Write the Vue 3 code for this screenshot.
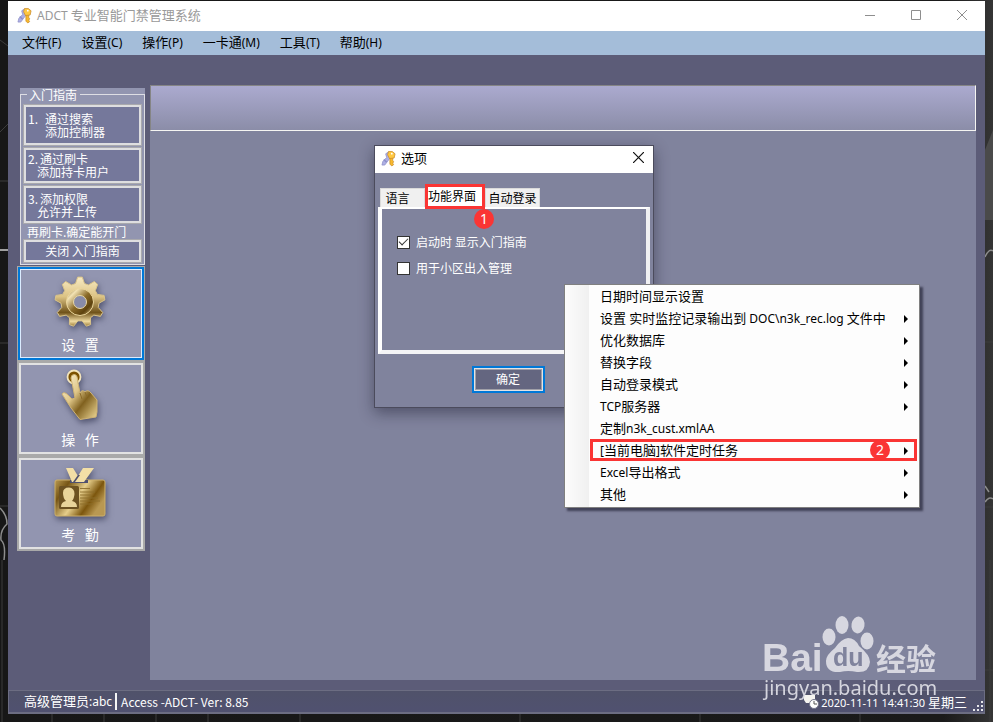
<template>
  <div class="desktop">
    <svg class="wallpaper" viewBox="0 0 993 722" preserveAspectRatio="none" aria-hidden="true">
      <g fill="none" stroke="#3c3c3c">
        <path d="M0 181 H8 M0 343 H8 M0 506 H8 M985 342 H993 M985 507 H993 M985 670 H993" />
        <path d="M0 132 L8 124 M0 40 L8 46 M2 560 V722 M990 560 V722 M52 714 V722 M104 714 V722 M156 714 V722 M208 714 V722 M300 714 V722 M520 714 V722 M700 714 V722 M860 714 V722" />
      </g>
      <path d="M985 150 L993 130 V220 H985 Z" fill="#4a4a4a" />
      <path d="M0 250 H8" stroke="#a0a0a0" stroke-width="2" />
      <g fill="none" stroke="#8d8d8d" stroke-width="1.5">
        <path d="M0 508 Q7 515 7 524 Q0 530 1 540 Q6 544 4 560" />
        <path d="M985 257 Q989 248 993 251 M985 502 Q989 496 993 499 M985 486 L989 492" />
      </g>
    </svg>

    <main class="window">
      <header class="titlebar">
        <svg class="keys" viewBox="0 0 16 18" aria-hidden="true">
          <path d="M8 2 L10 8 L4 16 L1 16 L2 12 L6 8 L5 4 Z" fill="#aeb0e4" stroke="#8d8fc8" stroke-width=".8" />
          <path d="M3 10 L6 13" stroke="#8d8fc8" stroke-width="1.6" />
          <path d="M9.5 8 V15 L11.5 17 L13.5 15.5 L12.5 14 L13.500 12.500 L12.500 11 V8 Z" fill="#f8b92c" stroke="#c98b2c" stroke-width=".8" />
          <path d="M8 1.500 H12 L15 4 L14 8.500 L9 9 L7 5 Z" fill="#ffc840" stroke="#c98b2c" stroke-width=".8" />
          <circle cx="11.500" cy="3.800" r="1" fill="#fff" />
        </svg>
        <h1><span class="latin">ADCT </span>专业智能门禁管理系统</h1>
        <div class="caption">
          <button type="button" aria-label="最小化"><svg viewBox="0 0 10 10"><path d="M0 5.5 H10" /></svg></button>
          <button type="button" aria-label="最大化"><svg viewBox="0 0 10 10"><path d="M.5 .5 H9.5 V9.5 H.5 Z" /></svg></button>
          <button type="button" aria-label="关闭"><svg viewBox="0 0 10 10"><path d="M0 0 L10 10 M10 0 L0 10" /></svg></button>
        </div>
      </header>

      <nav class="menubar">
        <button v-for="m in menus" :key="m.key" type="button">{{ m.name }}<span class="latin">({{ m.key }})</span></button>
      </nav>

      <div class="body">
        <aside class="sidebar">
          <div class="guide">
            <fieldset>
              <legend>入门指南</legend>
              <button v-for="(s, i) in steps" :key="i" type="button" :class="['step', 'step--' + (i + 1)]">
                <span class="step__no">{{ i + 1 }}.</span>
                <span class="step__text">
                  <span>{{ s[0] }}</span>
                  <span class="step__second">{{ s[1] }}</span>
                </span>
              </button>
              <p>再刷卡.确定能开门</p>
              <button type="button" class="guide__close">关闭 入门指南</button>
            </fieldset>
          </div>

          <div class="tools">
            <button type="button" class="tool tool--active">
              <svg viewBox="0 0 56 60" aria-hidden="true">
                <defs>
                  <linearGradient id="gold" x1="0" y1="0" x2="1" y2="1">
                    <stop offset="0" stop-color="#fff6dc" />
                    <stop offset=".4" stop-color="#dfc687" />
                    <stop offset=".62" stop-color="#80611f" />
                    <stop offset="1" stop-color="#f2dc9a" />
                  </linearGradient>
                  <linearGradient id="ring" x1="0" y1="0" x2="1" y2="1">
                    <stop offset="0" stop-color="#6f5219" />
                    <stop offset=".22" stop-color="#f3e3b4" />
                    <stop offset=".5" stop-color="#8a6a28" />
                    <stop offset=".75" stop-color="#5d420e" />
                    <stop offset="1" stop-color="#e2c98a" />
                  </linearGradient>
                  <linearGradient id="goldGear" x1="0" y1="0" x2="0" y2="1">
                    <stop offset="0" stop-color="#f8ebc3" />
                    <stop offset=".4" stop-color="#dcc384" />
                    <stop offset=".72" stop-color="#70531a" />
                    <stop offset=".9" stop-color="#f0dba0" />
                    <stop offset="1" stop-color="#9c7b36" />
                  </linearGradient>
                </defs>
                <path :d="gearPath" fill="url(#goldGear)" stroke="#d9c389" stroke-linejoin="round" />
                <circle cx="28" cy="29" r="13.5" fill="url(#ring)" stroke="#ecd79c" />
                <circle cx="28" cy="29" r="6.5" fill="#888ba8" stroke="#ead8a5" />
              </svg>
              <span>设&nbsp;&nbsp;&nbsp;置</span>
            </button>
            <button type="button" class="tool">
              <svg viewBox="0 0 56 60" aria-hidden="true">
                <circle cx="22" cy="9" r="6.500" fill="#7c5100" stroke="#f3e5bd" stroke-width="1.8" />
                <path d="M19 10 Q19 6.500 22.500 6.500 Q25.500 7 25.500 12 L28 25 Q30 21 33 24 Q36 21 39 25 L45 32 V44 L44 49 L28 51.500 L19 40 L10 26 Q12 23 16 27 L20 31 L23 30 Z" fill="url(#gold)" stroke="#cfb374" />
                <path d="M28 25 L30 31 M33 24 L35 29" stroke="#8b6b2b" />
              </svg>
              <span>操&nbsp;&nbsp;&nbsp;作</span>
            </button>
            <button type="button" class="tool">
              <svg viewBox="0 0 56 60" aria-hidden="true">
                <defs>
                  <linearGradient id="badge" x1="0" y1="0" x2="1" y2=".5">
                    <stop offset="0" stop-color="#b99a52" />
                    <stop offset=".25" stop-color="#765515" />
                    <stop offset=".55" stop-color="#e6ce8b" />
                    <stop offset=".8" stop-color="#7c560d" />
                    <stop offset="1" stop-color="#b99852" />
                  </linearGradient>
                </defs>
                <rect x="3" y="17" width="50" height="36" rx="2" fill="url(#badge)" stroke="#cdb06b" />
                <path d="M18 17 H36 V20 H18 Z" fill="#4f5070" />
                <path d="M14 5 H21 L26 13 L31 5 H42 L32 19 H20 Z" fill="#f3dfa6" />
                <path d="M26 12 L21 19 H23 L28 12 Z" fill="#50506c" />
                <rect x="7" y="23" width="20" height="23" rx="1.500" fill="#6d5221" />
                <path d="M11 30 Q11 24.500 17 24.500 Q22.500 25 22.500 31 Q22 36 20 38 Q25 39 25 44 H9 Q9 39 14 38 Q11 35 11 30 Z" fill="#e9d49a" />
                <path d="M28 25.500 H38 M28 29 H43 M28 32 H39 M28 35 H46 M28 38 H48 M28 41 H41" stroke="#8d6d2b" stroke-width=".9" />
              </svg>
              <span>考&nbsp;&nbsp;&nbsp;勤</span>
            </button>
          </div>
        </aside>

        <section class="workspace"><div class="workspace__band"></div></section>
      </div>

      <footer class="status">
        <span class="status__user">高级管理员<span class="latin">:abc</span></span>
        <span class="status__version">Access -ADCT- Ver: 8.85</span>
        <svg class="status__clock" viewBox="0 0 16 14" aria-hidden="true">
          <path d="M1 0 H12 V8 H3 L1 5 Z" fill="#f5f4ef" />
          <circle cx="11" cy="9" r="4.500" fill="#fff" stroke="#75758b" />
          <path d="M11 6 V9 H14" fill="none" stroke="#555" />
        </svg>
        <time datetime="2020-11-11T14:41:30"><span class="status__digits">2020-11-11 14:41:30 </span>星期三</time>
        <svg class="grip" viewBox="0 0 12 12" aria-hidden="true">
          <path d="M9 1 H11 V3 H9 Z M9 5 H11 V7 H9 Z M9 9 H11 V11 H9 Z M5 5 H7 V7 H5 Z M5 9 H7 V11 H5 Z M1 9 H3 V11 H1 Z" fill="#e6e6ea" />
        </svg>
      </footer>
    </main>

    <section class="dialog" role="dialog" aria-labelledby="dialog-title">
      <header class="dialog__title">
        <svg class="keys" viewBox="0 0 16 18" aria-hidden="true">
          <path d="M8 2 L10 8 L4 16 L1 16 L2 12 L6 8 L5 4 Z" fill="#aeb0e4" stroke="#8d8fc8" stroke-width=".8" />
          <path d="M3 10 L6 13" stroke="#8d8fc8" stroke-width="1.6" />
          <path d="M9.5 8 V15 L11.5 17 L13.5 15.5 L12.5 14 L13.500 12.500 L12.500 11 V8 Z" fill="#f8b92c" stroke="#c98b2c" stroke-width=".8" />
          <path d="M8 1.500 H12 L15 4 L14 8.500 L9 9 L7 5 Z" fill="#ffc840" stroke="#c98b2c" stroke-width=".8" />
          <circle cx="11.500" cy="3.800" r="1" fill="#fff" />
        </svg>
        <h2 id="dialog-title">选项</h2>
        <button type="button" aria-label="关闭"><svg viewBox="0 0 10 10"><path d="M0 0 L10 10 M10 0 L0 10" /></svg></button>
      </header>
      <div class="tabs" role="tablist">
        <button type="button" role="tab" class="tab tab--first">语言</button>
        <button type="button" role="tab" class="tab tab--active" aria-selected="true">功能界面</button>
        <button type="button" role="tab" class="tab">自动登录</button>
        <b class="marker marker--tab">1</b>
      </div>
      <div class="panel">
        <label><input v-model="showGuide" type="checkbox" />启动时 显示入门指南</label>
        <label><input v-model="community" type="checkbox" />用于小区出入管理</label>
      </div>
      <button type="button" class="ok">确定</button>
    </section>

    <div class="popup" role="menu">
      <button
        v-for="item in items"
        :key="item.label"
        type="button"
        role="menuitem"
        :class="['popup__item', { 'popup__item--marked': item.marked }]"
      >
        <span class="popup__label"><span v-for="(part, i) in split(item.label)" :key="i" :class="{ latin: isLatin(part) }">{{ part }}</span></span>
        <b v-if="item.marked" class="marker">2</b>
        <svg v-if="item.sub" class="popup__arrow" viewBox="0 0 4 8" aria-hidden="true"><path d="M0 0 L4 4 L0 8 Z" /></svg>
      </button>
    </div>

    <svg class="watermark" viewBox="0 0 180 86" aria-hidden="true">
      <g fill="#dcdce4">
        <text x="0" y="57" class="watermark__bai">Bai</text>
        <ellipse cx="67" cy="23" rx="6.5" ry="8.5" />
        <ellipse cx="80" cy="11" rx="6.500" ry="9" />
        <ellipse cx="96" cy="11" rx="6.500" ry="8.500" transform="rotate(10 96 11)" />
        <ellipse cx="105" cy="27" rx="6.500" ry="8.500" />
        <path d="M86 24 Q93 24 97 32 Q108 41 108 48 Q107 59 95 58 Q86 56 78 58 Q64 59 64 47 Q64 41 73 34 Q79 25 86 24 Z" />
        <text x="114" y="56" class="watermark__cn">经验</text>
        <text x="2" y="81" class="watermark__url">jingyan.baidu.com</text>
      </g>
      <text x="71" y="52" class="watermark__du">du</text>
    </svg>
  </div>
</template>

<script setup>
import { ref } from 'vue'

const showGuide = ref(true)
const community = ref(false)

const menus = [
  { name: '文件', key: 'F' },
  { name: '设置', key: 'C' },
  { name: '操作', key: 'P' },
  { name: '一卡通', key: 'M' },
  { name: '工具', key: 'T' },
  { name: '帮助', key: 'H' },
]

const steps = [
  ['通过搜索', '添加控制器'],
  ['通过刷卡', '添加持卡用户'],
  ['添加权限', '允许并上传'],
]

const items = [
  { label: '日期时间显示设置' },
  { label: '设置 实时监控记录输出到 DOC\\n3k_rec.log 文件中', sub: true },
  { label: '优化数据库', sub: true },
  { label: '替换字段', sub: true },
  { label: '自动登录模式', sub: true },
  { label: 'TCP服务器', sub: true },
  { label: '定制n3k_cust.xmlAA' },
  { label: '[当前电脑]软件定时任务', sub: true, marked: true },
  { label: 'Excel导出格式', sub: true },
  { label: '其他', sub: true },
]

const split = (label) => label.match(/[\x20-\x7e]+|[^\x20-\x7e]+/g)
const isLatin = (part) => /^[\x20-\x7e]/.test(part)

// teeth are laid out clockwise from the top, round (28, 29)
function gear(teeth, outer, inner) {
  const step = (Math.PI * 2) / teeth
  const pts = []
  for (let i = 0; i < teeth; i++) {
    const mid = i * step - Math.PI / 2
    for (const [offset, r] of [[-0.34, inner], [-0.13, outer], [0.13, outer], [0.34, inner]]) {
      const a = mid + offset * step
      pts.push(`${(28 + Math.cos(a) * r).toFixed(1)} ${(29 + Math.sin(a) * r).toFixed(1)}`)
    }
  }
  return `M${pts.join(' L')} Z`
}
const gearPath = gear(9, 25, 19)
</script>

<style>
body {
  background: #181818;
}
</style>

<style scoped>
.desktop {
  position: relative;
  display: flex;
  box-sizing: border-box;
  min-height: 100vh;
  padding: 1px 8px 8px;
  overflow: hidden;
  background: linear-gradient(90deg, #171717 0%, #1a1a1a 95%, #353535 100%);
  color: #fff;
  font: 13px/20px "Noto Sans CJK SC", sans-serif;
}

button {
  margin: 0;
  padding: 0;
  border: 0;
  background: none;
  color: inherit;
  font: inherit;
}

h1,
h2,
p {
  margin: 0;
  font: inherit;
}

.latin {
  font-family: "Noto Sans", sans-serif;
  font-size: 12px;
  white-space: pre-wrap;
}

.wallpaper {
  position: absolute;
  inset: 0;
  width: 100%;
  height: 100%;
}

.window {
  position: relative;
  display: flex;
  flex: 1;
  flex-direction: column;
  min-width: 0;
  background: #5c5c78;
}

.titlebar {
  display: flex;
  align-items: center;
  box-sizing: border-box;
  height: 30px;
  padding: 0 0 2px 9px;
  background: #fff;
  color: #999;
}

.keys {
  width: 15px;
  height: 17px;
  margin-right: 5px;
  fill: none;
}

.caption {
  display: flex;
  margin-left: auto;
}

.caption button {
  height: 28px;
  width: 46px;
}

.caption svg {
  width: 10px;
  height: 10px;
  fill: none;
  stroke: #8e8e8e;
}

.menubar {
  display: flex;
  gap: 20px;
  box-sizing: border-box;
  height: 24px;
  padding: 0 0 2px 14px;
  background: #a4bdd9;
  color: #000;
}

.body {
  display: flex;
  flex: 1;
  gap: 5px;
  padding: 30px 9px 10px;
}

.sidebar {
  display: flex;
  flex-direction: column;
  width: 128px;
  padding-top: 3px;
}

.guide {
  margin-left: 3px;
  background: #9295b0;
}

.guide fieldset {
  display: flex;
  flex-direction: column;
  min-width: 0;
  margin: 0;
  padding: 4px 3px 2px;
  border: 1px solid #dedee4;
  font-size: 12px;
  line-height: 13px;
}

.guide legend {
  margin-left: 3px;
  padding: 0 3px 0 2px;
}

.step {
  display: flex;
  gap: 2px;
  height: 35px;
  margin-bottom: 3px;
  padding: 2px 2px 3px;
  text-align: left;
}

.step,
.guide__close {
  box-sizing: border-box;
  border: 2px solid #dedee0;
  outline: 1px solid #a9a9ad;
  background: #75789b;
  line-height: 13px;
}

.step--1 {
  gap: 7px;
  height: 40px;
  padding-top: 5px;
}

.step--2 .step__second,
.step--3 .step__second {
  margin-left: -3px;
}

.step--3 {
  height: 37px;
  padding-top: 4px;
}

.step__no {
  flex: none;
  width: 10px;
}

.step__text {
  display: flex;
  flex-direction: column;
  white-space: nowrap;
}

.guide p {
  padding-left: 3px;
  line-height: 12px;
}

.guide__close {
  height: 22px;
  margin-top: 2px;
  padding-bottom: 2px;
}

.tools {
  display: flex;
  flex-direction: column;
  gap: 4px;
  margin-top: 1px;
  padding: 2px;
  background: #a9a9a9;
}

.tool {
  display: flex;
  flex-direction: column;
  align-items: center;
  box-sizing: border-box;
  height: 91px;
  padding: 3px 2px 2px 0;
  border: 2px solid #e2e2e2;
  background: #9295b0;
  font-size: 14px;
  line-height: 20px;
}

.tool svg {
  width: 56px;
  height: 60px;
  filter: drop-shadow(1px 3px 3px rgba(45, 48, 75, 0.65));
}

.tool span {
  margin-top: 1px;
}

.tool--active {
  padding: 4px 3px 3px 1px;
  border-width: 1px;
  border-color: #0078d7;
  box-shadow: 0 0 0 1px #0078d7, inset 0 0 0 1px #dcecff;
}

.workspace {
  flex: 1;
  background: #80839d;
}

.workspace__band {
  box-sizing: border-box;
  height: 46px;
  border: 1px solid #858585;
  border-right-color: #f5f5f2;
  border-bottom-color: #f5f5f2;
  background: linear-gradient(#abaacf, #8b8da8);
}

.status {
  display: flex;
  align-items: center;
  box-sizing: border-box;
  height: 24px;
  padding: 0 0 0 15px;
  border: 1px solid #6c6d82;
  border-bottom-width: 2px;
  background: linear-gradient(#50526a, #505170);
}

.status__user {
  padding-right: 3px;
  border-right: 2px solid #f5f5f5;
  line-height: 16px;
}

.status__version {
  margin-right: auto;
  padding-left: 4px;
  font-size: 12px;
}

.status__clock {
  width: 16px;
  height: 14px;
  margin-right: 2px;
}

.status time {
  white-space: pre;
}

.status__digits {
  font: 11px "Noto Sans", sans-serif;
}

.grip {
  align-self: flex-end;
  width: 12px;
  height: 12px;
  margin-left: 5px;
}

.dialog {
  position: absolute;
  top: 145px;
  left: 374px;
  display: flex;
  flex-direction: column;
  box-sizing: border-box;
  width: 280px;
  padding-bottom: 14px;
  border: 1px solid #4b4b5c;
  background: #80839d;
  box-shadow: 0 5px 14px rgba(20, 20, 40, 0.45);
}

.dialog__title {
  display: flex;
  align-items: center;
  box-sizing: border-box;
  height: 27px;
  padding: 0 9px 3px 6px;
  background: #fff;
  color: #000;
}

.dialog__title button {
  width: 12px;
  height: 20px;
  margin-left: auto;
}

.dialog__title button svg {
  width: 11px;
  height: 11px;
  stroke: #111;
  stroke-width: 1.1;
}

.tabs {
  position: relative;
  display: flex;
  align-items: flex-end;
  margin-top: 11px;
  padding-left: 5px;
}

.tab {
  box-sizing: border-box;
  width: 55px;
  height: 19px;
  border: 1px solid #dadada;
  border-bottom: 0;
  background: #f0f0f0;
  color: #000;
  font-size: 12px;
  line-height: 18px;
  white-space: nowrap;
}

.tab--first {
  width: 45px;
  padding-right: 10px;
}

.tab--active {
  position: relative;
  width: 60px;
  height: 25px;
  margin-bottom: -2px;
  padding: 0 6px 2px 0;
  border: 3px solid #fa3534;
  background: #fff;
}

.marker {
  width: 20px;
  height: 20px;
  border-radius: 50%;
  background: #fa3534;
  color: #fff;
  font: 14px/20px "Noto Sans", sans-serif;
  text-align: center;
}

.marker--tab {
  position: absolute;
  top: 25px;
  left: 99px;
}

.panel {
  display: flex;
  flex-direction: column;
  align-items: flex-start;
  gap: 6px;
  box-sizing: border-box;
  min-height: 147px;
  margin: 0 3px;
  padding: 23px 15px;
  border: 4px solid #fff;
  border-top-width: 2px;
  border-right-color: #f0f0f2;
  border-bottom-color: #f4f4f6;
  font-size: 12px;
}

.panel label {
  display: flex;
  align-items: center;
  gap: 6px;
}

.panel input {
  box-sizing: border-box;
  width: 13px;
  height: 13px;
  margin: 0;
  border: 1px solid #333;
  background: #fff;
  appearance: none;
}

.panel input:checked::before {
  display: block;
  width: 8px;
  height: 4px;
  margin: 1px 0 0 1px;
  border: solid #333;
  border-width: 0 0 1px 1px;
  content: "";
  transform: rotate(-45deg);
}

.ok {
  align-self: center;
  box-sizing: border-box;
  width: 73px;
  height: 27px;
  margin-top: 12px;
  margin-right: 12px;
  padding-bottom: 1px;
  border: 2px solid #0078d7;
  background: #646680;
  box-shadow: inset 0 0 0 1px #e4e4e4, inset 0 0 0 2px #a0a0a8;
  font-size: 12px;
}

.popup {
  position: absolute;
  top: 284px;
  left: 564px;
  display: flex;
  flex-direction: column;
  box-sizing: border-box;
  width: 356px;
  padding: 0 2px 2px 25px;
  border: 1px solid #808080;
  background: linear-gradient(90deg, #fcfcfc, #f0f0f0 24px, #fdfdfd 24px);
  box-shadow: 3px 3px 2px rgba(30, 30, 50, 0.65);
  color: #000;
}

.popup__item {
  display: flex;
  align-items: center;
  box-sizing: border-box;
  height: 22px;
  padding: 0 9px 0 10px;
  text-align: left;
}

.popup__item--marked {
  padding: 0 6px 0 7px;
  border: 3px solid #fa3534;
}

.popup__label {
  flex: 1;
  white-space: nowrap;
}

.popup__item .marker {
  margin-right: 14px;
}

.popup__arrow {
  width: 4px;
  height: 8px;
  margin-top: 2px;
}

.watermark {
  position: absolute;
  right: 51px;
  bottom: 22px;
  width: 180px;
  height: 86px;
  overflow: visible;
  opacity: 0.95;
}

.watermark__bai {
  font: bold 39px "Liberation Sans", sans-serif;
}

.watermark__cn {
  font: bold 30px "Noto Sans CJK SC", sans-serif;
}

.watermark__url {
  font: 20px "Noto Sans", sans-serif;
}

.watermark__du {
  fill: #80839d;
  font: bold 25px "Liberation Sans", sans-serif;
}
</style>
